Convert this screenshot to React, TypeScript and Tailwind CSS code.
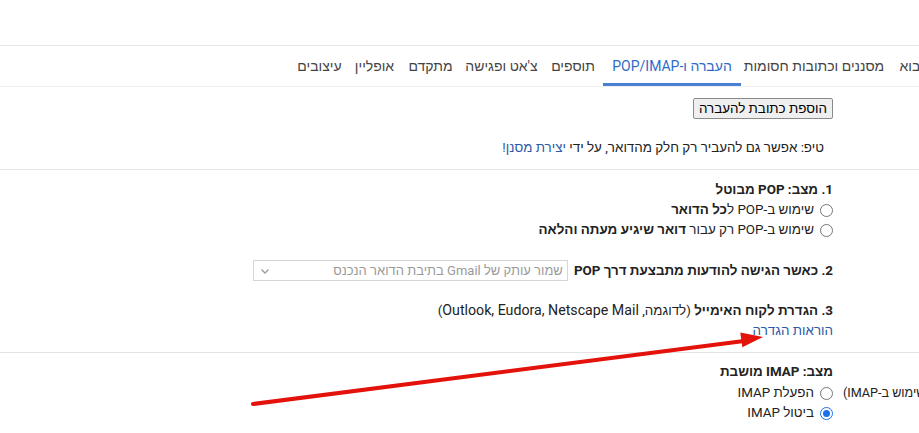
import React from "react";

const tabs: { label: string; w: string; active?: boolean }[] = [
  { label: "עיצובים", w: "w-[57px]" },
  { label: "אופליין", w: "w-[53px]" },
  { label: "מתקדם", w: "w-[59px]" },
  { label: "צ'אט ופגישה", w: "w-[83px]" },
  { label: "תוספים", w: "w-[60px]" },
  { label: "העברה ו-POP/IMAP", w: "w-[138px]", active: true },
  { label: "מסננים וכתובות חסומות", w: "w-[146px]" },
  { label: "חשבונות וייבוא", w: "w-[110px]" },
];

function Radio({ checked }: { checked?: boolean }) {
  return checked ? (
    <span className="ml-[6px] flex h-[13px] w-[13px] shrink-0 items-center justify-center rounded-full border border-[#1a73e8] bg-white">
      <span className="h-[7px] w-[7px] rounded-full bg-[#1a73e8]" />
    </span>
  ) : (
    <span className="ml-[6px] h-[13px] w-[13px] shrink-0 rounded-full border border-[#767676] bg-white" />
  );
}

function Row({ label, children, className }: { label?: React.ReactNode; children: React.ReactNode; className?: string }) {
  return (
    <div className={"flex " + (className ?? "")}>
      <div className="w-[279px] shrink-0 pl-[3px] text-left">{label}</div>
      <div className="flex-1 pr-[7px]">{children}</div>
    </div>
  );
}

export default function App() {
  return (
    <div className="relative h-[433px] w-[919px] overflow-hidden bg-white font-[family-name:Roboto,Liberation_Sans,Arial,sans-serif] text-[14px] text-[#222]">
      <div className="h-[46px] border-b border-[#e6e6e6]" />
      <div className="flex h-[41px] border-b border-[#f0f0f0] pl-[291px]">
        {tabs.map((t) => (
          <div
            key={t.label}
            dir="rtl"
            className={
              "flex shrink-0 items-center justify-center whitespace-nowrap border-b-[3px] pt-[3px] " +
              t.w +
              (t.active ? " border-[#4a7fd4] text-[#2f6bc7]" : " border-transparent text-[#444]")
            }
          >
            {t.label}
          </div>
        ))}
      </div>

      <div dir="rtl" className="mr-[-200px] text-[13.4px] leading-[20px]">
        <Row className="border-b border-[#e4e4e4] pb-[11px] pt-[11px]">
          <div className="flex">
            <button className="h-[21px] rounded-[2px] border border-[#8a8a8a] bg-[#efefef] px-[5px] text-[13.4px] leading-[19px] text-black">
              הוספת כתובת להעברה
            </button>
          </div>
          <div className="mt-[19px] pr-[9px]">
            טיפ: אפשר גם להעביר רק חלק מהדואר, על ידי <span className="text-[#2a5aa8]">יצירת מסנן!</span>
          </div>
        </Row>

        <Row className="border-b border-[#e4e4e4] pb-[11px] pt-[10px]">
          <div className="font-bold">1. מצב: POP מבוטל</div>
          <div className="flex items-center">
            <Radio />
            <span>
              שימוש ב-POP ל<b>כל הדואר</b>
            </span>
          </div>
          <div className="flex items-center">
            <Radio />
            <span>
              שימוש ב-POP רק עבור <b>דואר שיגיע מעתה והלאה</b>
            </span>
          </div>
          <div className="mt-[20px] flex h-[21px] items-center">
            <span className="whitespace-nowrap font-bold">2. כאשר הגישה להודעות מתבצעת דרך POP</span>
            <div className="mr-[6px] flex h-[21px] w-[315px] items-center justify-between border border-[#d6d6d6] bg-white pl-[6px] pr-[4px] text-[13px] text-[#9a9a9a]">
              <span className="whitespace-nowrap">שמור עותק של Gmail בתיבת הדואר הנכנס</span>
              <svg width="10" height="10" viewBox="0 0 10 10" className="shrink-0">
                <path d="M1.5 3.5 L5 7 L8.5 3.5" fill="none" stroke="#9a9a9a" strokeWidth="1.3" />
              </svg>
            </div>
          </div>
          <div className="mt-[19px]">
            <b>3. הגדרת לקוח האימייל</b> (לדוגמה, <span className="text-[14.2px]">Outlook, Eudora, Netscape Mail</span>)
          </div>
          <div className="text-[#2a5aa8]">הוראות הגדרה</div>
        </Row>

        <Row
          className="pt-[9px]"
          label={
            <div className="pt-[21px] text-[12.6px]">
              <span className="whitespace-nowrap">(גישה משרתים אחרים באמצעות שימוש ב-IMAP)</span>
            </div>
          }
        >
          <div className="font-bold">מצב: IMAP מושבת</div>
          <div className="mt-[1px] flex items-center">
            <Radio />
            <span>הפעלת IMAP</span>
          </div>
          <div className="flex items-center">
            <Radio checked />
            <span>ביטול IMAP</span>
          </div>
        </Row>
      </div>

      <svg className="pointer-events-none absolute inset-0" width="919" height="433" viewBox="0 0 919 433">
        <line x1="253" y1="404" x2="744" y2="341" stroke="#e3120b" strokeWidth="4" strokeLinecap="round" />
        <polygon points="763,337 740.3,332.5 742.3,347.3" fill="#e3120b" />
      </svg>
    </div>
  );
}
